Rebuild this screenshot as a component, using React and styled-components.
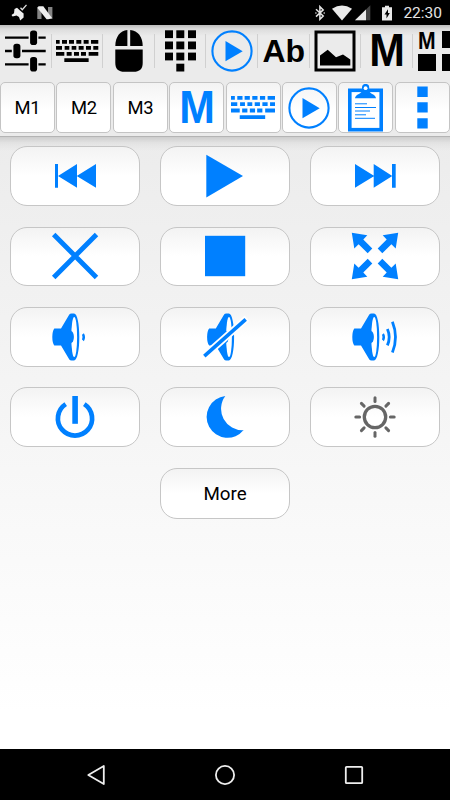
import React from "react";
import styled, { createGlobalStyle } from "styled-components";

const BLUE = "#0080ff";

const GlobalStyle = createGlobalStyle`
  body {
    margin: 0;
    background: #000;
    font-family: Roboto, "Liberation Sans", sans-serif;
  }

  svg {
    display: block;
    flex-shrink: 0;
  }
`;

const Screen = styled.div`
  width: 450px;
  height: 800px;
  display: flex;
  flex-direction: column;
  overflow: hidden;
`;

const StatusBar = styled.div`
  height: 25px;
  flex-shrink: 0;
  display: flex;
  align-items: center;
  justify-content: space-between;
  box-sizing: border-box;
  padding: 0 8px 0 11px;
  background: #000;
`;

const StatusGroup = styled.div`
  display: flex;
  align-items: center;
`;

const Clock = styled.span`
  margin-left: 11px;
  font-size: 15.5px;
  line-height: 25px;
  padding-top: 1px;
  height: 24px;
  color: #e4e4e4;
`;

const Header = styled.header`
  height: 112px;
  flex-shrink: 0;
  box-sizing: border-box;
  background: linear-gradient(#bcbcbc 0, #dcdcdc 4px, #ebebeb 11px);
  border-bottom: 1px solid #b4b4b4;
`;

const Tabs = styled.nav`
  height: 52px;
  display: flex;
  overflow: hidden;
`;

const Tab = styled.button`
  width: 51.6px;
  flex-shrink: 0;
  display: flex;
  align-items: center;
  justify-content: center;
  padding: 0;
  border: 0;
  color: ${(props) => (props.$active ? BLUE : "#000")};
  background: linear-gradient(#d0d0d0, #d0d0d0) right center / 1px 34px
    no-repeat;
`;

const Letters = styled.span`
  font-family: "Liberation Sans", Arial, sans-serif;
  font-weight: bold;
  font-size: ${(props) => props.$size}px;
  line-height: 1;
  transform: scaleX(${(props) => props.$stretch || 1});
`;

const Shortcuts = styled.div`
  display: grid;
  grid-template-columns: repeat(8, 55px);
  column-gap: 1.4px;
  padding-top: 5px;
`;

const Shortcut = styled.button`
  height: 51px;
  display: flex;
  align-items: center;
  justify-content: center;
  box-sizing: border-box;
  padding: 0;
  border: 1px solid #c4c4c4;
  border-radius: 5px;
  background: linear-gradient(#f3f3f3, #fff 55%);
  font-family: inherit;
  font-size: 18.4px;
  letter-spacing: -0.3px;
  color: ${(props) => (props.$text ? "#000" : BLUE)};
`;

const Content = styled.main`
  flex: 1;
  padding-top: 9.4px;
  background: linear-gradient(
      rgba(0, 0, 0, 0.13),
      rgba(0, 0, 0, 0.04) 6px,
      rgba(0, 0, 0, 0) 14px
    ),
    linear-gradient(#ececec, #fff 94%);
`;

const Pad = styled.div`
  display: grid;
  grid-template-columns: repeat(3, 130px);
  grid-auto-rows: 59.6px;
  gap: 20.7px 20px;
  justify-content: center;
`;

const PadButton = styled.button`
  display: flex;
  align-items: center;
  justify-content: center;
  box-sizing: border-box;
  padding: 0;
  border: 1px solid #c6c6c6;
  border-radius: 17px;
  background: linear-gradient(#f3f3f3, #fff 50%);
  color: ${(props) => (props.$dim ? "#666" : BLUE)};
`;

const MoreButton = styled(PadButton)`
  width: 130px;
  height: 51px;
  margin: 21px auto 0;
  padding-top: 2px;
  font-family: inherit;
  font-size: 18.75px;
  color: #000;
`;

const NavBar = styled.footer`
  height: 51px;
  flex-shrink: 0;
  display: grid;
  grid-template-columns: repeat(3, 1fr);
  place-items: center;
  box-sizing: border-box;
  padding: 0 31px;
  background: #000;
`;

/* status bar icons */

const AppStatus = () => (
  <svg width="42" height="17" viewBox="0 0 42 17">
    <path
      d="M.5 11 L3 9.2 L3.5 5 L6 3.8 L9 6.4 L12.6 9.5 L12.6 13.5 L9.2 16.5 L8 13 L5.5 11.4 L1.6 12.6 Z"
      fill="#eee"
    />
    <path d="M9.5 3.7 L11.3 5.7 L15.5 .8" stroke="#ddd" strokeWidth="1.3" fill="none" />
    <path d="M26.3 3h4.2v12h-4.2zM37 3h4.4v12H37z" fill="#858585" />
    <path d="M27.5 2.3h4.8l8.7 11.6-3.6 1.3h-1.8L26.5 4z" fill="#eee" />
  </svg>
);

const Bluetooth = () => (
  <svg width="10" height="16" viewBox="0 0 10 16">
    <path
      d="M1 4.3 L8.2 11 L4.9 14.3 V1.6 L8.2 4.9 L1 11.6"
      stroke="#e4e4e4"
      strokeWidth="1.5"
      fill="none"
    />
    <circle cx=".9" cy="8" r=".8" fill="#e4e4e4" />
    <circle cx="9.2" cy="8" r=".8" fill="#e4e4e4" />
  </svg>
);

const WifiIcon = styled.svg`
  margin-left: 7px;
`;

const SignalIcon = styled.svg`
  margin-left: 3px;
`;

const BatteryIcon = styled.svg`
  margin-left: 11px;
`;

const Wifi = () => (
  <WifiIcon width="20" height="16" viewBox="0 0 20 16">
    <path d="M0 3.8 Q10 -2.6 20 3.8 L10 15.6 Z" fill="#e9e9e9" />
  </WifiIcon>
);

const Signal = () => (
  <SignalIcon width="16" height="16" viewBox="0 0 16 16">
    <path d="M0 15.3 L15.3 .3 V15.3 Z" fill="#444" />
    <path d="M0 15.3 L11 4.5 V15.3 Z" fill="#e9e9e9" />
  </SignalIcon>
);

const Battery = () => (
  <BatteryIcon width="10" height="16" viewBox="0 0 10 16">
    <path d="M0 2.2h3V.7h4v1.5h3v13.4H0z" fill="#e9e9e9" />
    <path d="M6 4.2 L2.5 9.5 H4.5 V13.4 L7.8 8 H6 Z" fill="#000" />
  </BatteryIcon>
);

/* toolbar icons */

const Sliders = () => (
  <svg width="51" height="52" viewBox="0 0 51 52">
    <path
      d="M5 12.7H28.6M38.4 12.7H45.7M5 26H11.8M22 26H45.7M5 39.3H28.6M38.4 39.3H45.7"
      stroke="currentColor"
      strokeWidth="2.3"
    />
    <g fill="currentColor">
      <rect x="30.1" y="5.4" width="7" height="14.6" rx="2.8" />
      <rect x="13.4" y="18.7" width="7" height="14.6" rx="2.8" />
      <rect x="30.1" y="32" width="7" height="14.6" rx="2.8" />
    </g>
  </svg>
);

const Keyboard = ({ width = 42.3 }) => (
  <svg width={width} height={(width * 67) / 127} viewBox="0 0 127 67">
    <path
      fill="currentColor"
      d="M0 0h11v11H0zM18 0h15v11H18zM39 0h15v11H39zM61 0h15v11H61zM83 0h15v11H83zM105 0h22v11H105z
        M0 18h18v11H0zM26 18h14v11H26zM47 18h14v11H47zM68 18h15v11H68zM90 18h15v11H90zM112 18h15v11H112z
        M0 36h25v11H0zM32 36h15v11H32zM54 36h15v11H54zM75 36h15v11H75zM98 36h29v11H98z
        M25 55h73v12H25z"
    />
  </svg>
);

const Mouse = () => (
  <svg width="28" height="42" viewBox="0 0 28 42">
    <g fill="currentColor">
      <path d="M12.4 0 V16 H.3 C.3 7 5 .6 12.4 0Z" />
      <path d="M15.2 0 V16 H27.7 C27.7 7 23 .6 15.2 0Z" />
      <path d="M.3 19.4 H27.7 V33 C27.7 39 24.5 41.8 18.5 41.8 H9.5 C3.5 41.8 .3 39 .3 33Z" />
    </g>
  </svg>
);

const Keypad = () => (
  <svg width="31" height="42" viewBox="0 0 31 42">
    {[0.3, 11.5, 22.6].map((y) =>
      [0, 11.3, 23].map((x) => (
        <rect key={`${x}-${y}`} x={x} y={y} width="8" height="7.8" fill="currentColor" />
      ))
    )}
    <rect x="11.3" y="33.7" width="8" height="7.8" fill="currentColor" />
  </svg>
);

const CirclePlay = () => (
  <svg width="42" height="42" viewBox="0 0 42 42">
    <circle cx="21" cy="21" r="19.6" stroke="currentColor" strokeWidth="2.1" fill="none" />
    <path d="M14.5 11 V31.2 L31.7 21.2 Z" fill="currentColor" />
  </svg>
);

const Picture = () => (
  <svg width="42" height="42" viewBox="0 0 42 42">
    <rect x="2" y="2" width="38" height="38" stroke="currentColor" strokeWidth="3" fill="none" />
    <path
      d="M6 25.6 L13.7 19.8 L22 27.3 L29 24.5 L36.3 29.5 V35.6 H6Z"
      fill="currentColor"
    />
  </svg>
);

const MacroGrid = styled.div`
  width: 42px;
  height: 41px;
  display: grid;
  grid-template-columns: 18px 18px;
  grid-template-rows: 17px 17px;
  gap: 6.5px;
  flex-shrink: 0;
`;

const MacroCell = styled.span`
  background: currentColor;
`;

const MacroLetter = styled(Letters)`
  width: 20px;
  height: 24px;
  line-height: 20px;
  transform-origin: left top;
  text-align: left;
`;

const Clipboard = () => (
  <svg width="35" height="48" viewBox="0 0 35 48">
    <rect x="1.8" y="6.3" width="31.4" height="39.4" stroke="currentColor" strokeWidth="3.6" fill="#fff" />
    <path
      d="M7 14.3 C7 11 12 10 14 7.5 V3.5 A3.6 3.6 0 0 1 21.2 3.5 V7.5 C23 10 28 11 28 14.3Z"
      fill="currentColor"
    />
    <circle cx="17.6" cy="4.2" r="1.9" fill="#fff" />
    <path
      d="M7 19.8H19M7 23.5H28M7 27H22M7 30.8H18M7 34.3H27"
      stroke="currentColor"
      strokeWidth="1"
    />
  </svg>
);

const Dots = () => (
  <svg width="11" height="43" viewBox="0 0 11 43">
    <path d="M.3 .4h10.4v10.6H.3zM.3 16.2h10.4v10.2H.3zM.3 32.2h10.4v10.2H.3z" fill="currentColor" />
  </svg>
);

/* pad icons, all on a 60px square */

const PadIcon = ({ children }) => (
  <svg width="60" height="60" viewBox="0 0 60 60" fill="currentColor">
    {children}
  </svg>
);

const Previous = () => (
  <PadIcon>
    <path d="M10 18H13V41.7H10zM13 30L32 18V41.7ZM31.7 30L51 18V41.7Z" />
  </PadIcon>
);

const Play = () => (
  <PadIcon>
    <path d="M11.3 8.7V51.4L48 30Z" />
  </PadIcon>
);

const Next = () => (
  <PadIcon>
    <path d="M10 18V41.7L29.3 30ZM28.7 18V41.7L47.3 30ZM47 18H50.7V41.7H47z" />
  </PadIcon>
);

const Close = () => (
  <PadIcon>
    <path d="M8.7 8.5L51.5 51.5M51.5 8.5L8.7 51.5" stroke="currentColor" strokeWidth="4.9" />
  </PadIcon>
);

const Stop = () => (
  <PadIcon>
    <rect x="10" y="9.8" width="40.2" height="40.4" />
  </PadIcon>
);

const Expand = () => (
  <PadIcon>
    {["", "matrix(-1 0 0 1 60 0)", "matrix(1 0 0 -1 0 60)", "rotate(180 30 30)"].map((t) => (
      <path
        key={t}
        transform={t}
        d="M6.8 6.7L22.3 9.2L18.3 13.5L27.3 22.6L22.7 27.2L13.6 18.2L9.3 22.6Z"
      />
    ))}
  </PadIcon>
);

const Speaker = () => (
  <>
    <path d="M9.3 21.4H16L24.3 7.5Q25 6.5 26.5 6.5H29C32.3 6.5 34.3 17 34.3 30S32.3 53.4 29 53.4H26.5Q25 53.4 24.3 52.4L16 38.4H9.3Q7.3 36 7.3 30T9.3 21.4Z" />
    <ellipse cx="29.2" cy="30" rx="2.9" ry="20" fill="#fff" />
    <ellipse cx="26" cy="30" rx="2.9" ry="6" />
  </>
);

const SmallWave = () => (
  <path d="M37 27.8Q38 30 37 32.4L38.9 34.2Q41.2 30 38.9 26.2Z" />
);

const VolumeDown = () => (
  <PadIcon>
    <Speaker />
    <SmallWave />
  </PadIcon>
);

const Mute = () => (
  <PadIcon>
    <g transform="translate(4.8 0)">
      <Speaker />
    </g>
    <path d="M8 50.2L52 11.2" stroke="#fff" strokeWidth="7.2" />
    <path d="M9.3 49.1L50.7 12.4" stroke="currentColor" strokeWidth="3.6" />
  </PadIcon>
);

const VolumeUp = () => (
  <PadIcon>
    <Speaker />
    <SmallWave />
    <path
      d="M42.4 22Q46 30 42.4 38.4M47.4 14.7Q53.6 30 47.4 45.6"
      stroke="currentColor"
      strokeWidth="2.8"
      fill="none"
    />
  </PadIcon>
);

const Power = () => (
  <PadIcon>
    <path
      d="M20.7 17.1A17.1 17.1 0 1 0 39.3 17.1"
      stroke="currentColor"
      strokeWidth="4.7"
      fill="none"
    />
    <rect x="27.3" y="9" width="5.6" height="27.8" />
  </PadIcon>
);

const Moon = () => (
  <PadIcon>
    <path d="M30.3 9.1A20.9 20.9 0 1 0 48.7 43.1A21.3 21.3 0 0 1 30.3 9.1Z" />
  </PadIcon>
);

const Sun = () => (
  <PadIcon>
    <circle cx="30" cy="30" r="10.7" stroke="currentColor" strokeWidth="3.3" fill="none" />
    {[0, 45, 90, 135, 180, 225, 270, 315].map((a) => (
      <path
        key={a}
        d="M30 10.8V14.6"
        stroke="currentColor"
        strokeWidth="3"
        strokeLinecap="round"
        transform={`rotate(${a} 30 30)`}
      />
    ))}
  </PadIcon>
);

const padItems = [Previous, Play, Next, Close, Stop, Expand, VolumeDown, Mute, VolumeUp, Power, Moon, Sun];

const App = () => {
  return (
    <Screen>
      <GlobalStyle />
      <StatusBar>
        <StatusGroup>
          <AppStatus />
        </StatusGroup>
        <StatusGroup>
          <Bluetooth />
          <Wifi />
          <Signal />
          <Battery />
          <Clock>22:30</Clock>
        </StatusGroup>
      </StatusBar>

      <Header>
        <Tabs>
          <Tab><Sliders /></Tab>
          <Tab><Keyboard /></Tab>
          <Tab><Mouse /></Tab>
          <Tab><Keypad /></Tab>
          <Tab $active><CirclePlay /></Tab>
          <Tab><Letters $size={32}>Ab</Letters></Tab>
          <Tab><Picture /></Tab>
          <Tab><Letters $size={45.5} $stretch={0.94}>M</Letters></Tab>
          <Tab>
            <MacroGrid>
              <MacroLetter $size={23} $stretch={0.92}>M</MacroLetter>
              <MacroCell />
              <MacroCell />
              <MacroCell />
            </MacroGrid>
          </Tab>
        </Tabs>
        <Shortcuts>
          <Shortcut $text>M1</Shortcut>
          <Shortcut $text>M2</Shortcut>
          <Shortcut $text>M3</Shortcut>
          <Shortcut><Letters $size={45.5} $stretch={0.94}>M</Letters></Shortcut>
          <Shortcut><Keyboard width={44.3} /></Shortcut>
          <Shortcut><CirclePlay /></Shortcut>
          <Shortcut><Clipboard /></Shortcut>
          <Shortcut><Dots /></Shortcut>
        </Shortcuts>
      </Header>

      <Content>
        <Pad>
          {padItems.map((Icon, i) => (
            <PadButton key={i} $dim={Icon === Sun}>
              <Icon />
            </PadButton>
          ))}
        </Pad>
        <MoreButton>More</MoreButton>
      </Content>

      <NavBar>
        <svg width="20" height="22" viewBox="0 0 20 22">
          <path d="M17.8 2V20L2.3 11Z" stroke="#eee" strokeWidth="1.8" strokeLinejoin="round" fill="none" />
        </svg>
        <svg width="22" height="22" viewBox="0 0 22 22">
          <circle cx="11" cy="11" r="9.1" stroke="#eee" strokeWidth="1.8" fill="none" />
        </svg>
        <svg width="20" height="20" viewBox="0 0 20 20">
          <rect x="1.8" y="1.8" width="16.4" height="16.4" rx=".8" stroke="#eee" strokeWidth="1.8" fill="none" />
        </svg>
      </NavBar>
    </Screen>
  );
};

export default App;
